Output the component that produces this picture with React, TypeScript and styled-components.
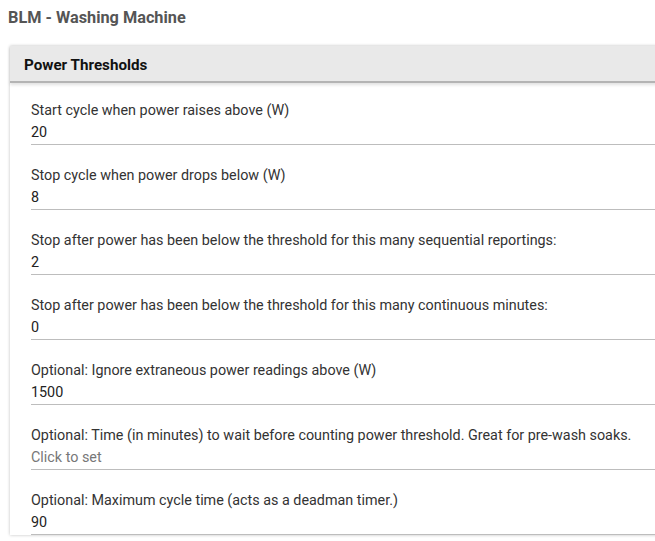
import React from "react";
import styled, { createGlobalStyle } from "styled-components";

const Global = createGlobalStyle`
  html, body { margin: 0; padding: 0; background: #fff; }
  body { font-family: Roboto, "Liberation Sans", Arial, sans-serif; overflow: hidden; }
`;

const Page = styled.div`
  width: 655px;
  height: 541px;
  overflow: hidden;
  padding: 0 0 0 10px;
  box-sizing: border-box;
`;

const Title = styled.h1`
  margin: 0 0 0 -2px;
  padding-top: 8px;
  height: 46px;
  box-sizing: border-box;
  font-size: 16.3px;
  font-weight: 700;
  color: #555;
  line-height: 19px;
`;

const Card = styled.section`
  width: 700px;
  background: #fff;
  box-shadow: 0 0 3px rgba(0, 0, 0, 0.25);
`;

const CardHeader = styled.div`
  height: 37px;
  box-sizing: border-box;
  padding: 2px 0 0 14px;
  background: #e9e9e9;
  border-bottom: 2px solid #b4b4b4;
  box-shadow: 0 2px 3px rgba(0, 0, 0, 0.12);
  display: flex;
  align-items: center;
  font-size: 15.2px;
  font-weight: 700;
  color: #111;
`;

const Body = styled.div`
  padding: 18px 0 0 21px;
  display: flex;
  flex-direction: column;
  gap: 21px;
`;

const Field = styled.div`
  display: flex;
  flex-direction: column;
  border-bottom: 1px solid #bdbdbd;
  padding-bottom: 1px;
`;

const Label = styled.label`
  font-size: 14.35px;
  line-height: 20px;
  color: #333;
  height: 22px;
`;

const Value = styled.div<{ $placeholder?: boolean }>`
  font-size: 14.35px;
  line-height: 20px;
  height: 20px;
  color: ${(p) => (p.$placeholder ? "#777" : "#222")};
`;

const fields: { label: string; value: string; placeholder?: boolean }[] = [
  { label: "Start cycle when power raises above (W)", value: "20" },
  { label: "Stop cycle when power drops below (W)", value: "8" },
  { label: "Stop after power has been below the threshold for this many sequential reportings:", value: "2" },
  { label: "Stop after power has been below the threshold for this many continuous minutes:", value: "0" },
  { label: "Optional: Ignore extraneous power readings above (W)", value: "1500" },
  {
    label: "Optional: Time (in minutes) to wait before counting power threshold. Great for pre-wash soaks.",
    value: "Click to set",
    placeholder: true,
  },
  { label: "Optional: Maximum cycle time (acts as a deadman timer.)", value: "90" },
];

export default function App() {
  return (
    <Page>
      <Global />
      <Title>BLM - Washing Machine</Title>
      <Card>
        <CardHeader>Power Thresholds</CardHeader>
        <Body>
          {fields.map((f) => (
            <Field key={f.label}>
              <Label>{f.label}</Label>
              <Value $placeholder={f.placeholder}>{f.value}</Value>
            </Field>
          ))}
        </Body>
      </Card>
    </Page>
  );
}
